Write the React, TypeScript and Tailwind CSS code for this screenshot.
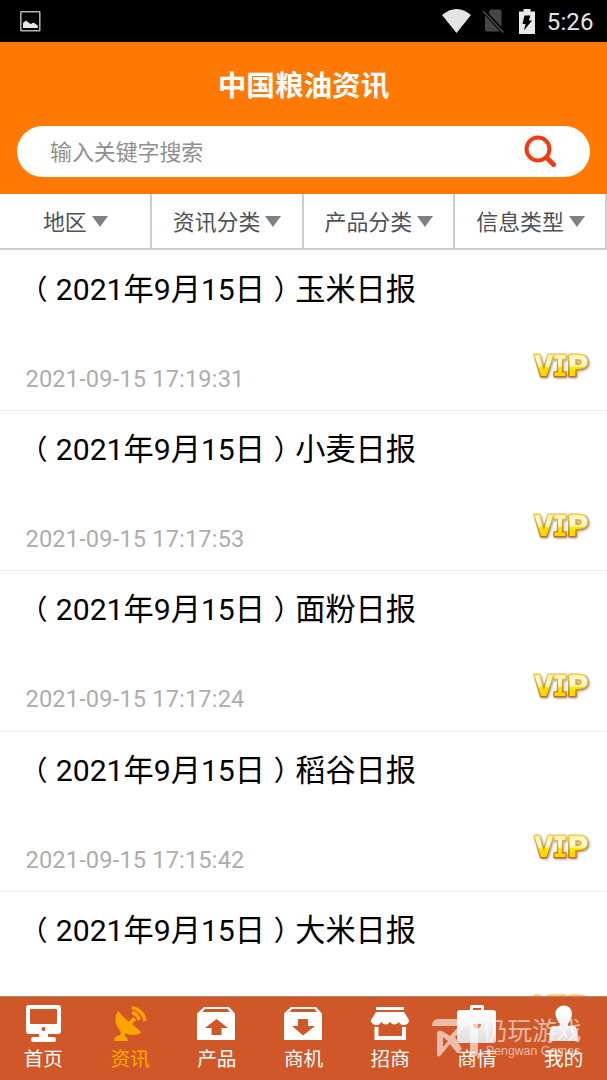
import React from "react";

const filters = ["地区", "资讯分类", "产品分类", "信息类型"];

const items = [
  { name: "玉米日报", time: "2021-09-15 17:19:31" },
  { name: "小麦日报", time: "2021-09-15 17:17:53" },
  { name: "面粉日报", time: "2021-09-15 17:17:24" },
  { name: "稻谷日报", time: "2021-09-15 17:15:42" },
  { name: "大米日报", time: "2021-09-15 17:14:08" },
];

function StatusBar() {
  return (
    <div className="flex h-[42px] shrink-0 items-center bg-black text-[#e4e4e4]">
      <svg className="ml-5 h-[21px] w-[21px]" viewBox="0 0 21 21">
        <rect x="0.8" y="0.8" width="19" height="19" rx="0.6" fill="none" stroke="#b4b4b4" strokeWidth="1.5" />
        <path d="M3 17V12L6 9.500L9 12L11 13L13.500 11.500L17.800 14.500V17Z" fill="#e8e8e8" />
      </svg>
      <svg className="ml-auto h-6 w-[29px]" viewBox="0 0 29 24">
        <path d="M0 6Q14.500 -6 29 6L14.500 24Z" fill="#e4e4e4" />
      </svg>
      <svg className="ml-[11px] h-6 w-[22px]" viewBox="0 0 22 24">
        <path d="M8.500 0.500H17.500Q19.500 0.500 19.500 2.500V18L6.500 4ZM3 6.500L18 22.500H5Q3 22.500 3 20.500Z" fill="#464646" />
        <path d="M1 2L21.500 23.500" stroke="#464646" strokeWidth="1.600" />
      </svg>
      <svg className="ml-[15px] h-[25px] w-4" viewBox="0 0 16 25">
        <path d="M4.500 0H11.500V2.500H16V25H0V2.500H4.500Z" fill="#e8e8e8" />
        <path d="M5.500 6.500H11.500L9.800 11.500H13L5 21.500L6.500 15H3.500Z" fill="#000" />
      </svg>
      <span className="ml-[12px] mr-[13.500px] pt-px font-['Roboto',sans-serif] text-[24px] leading-[42px] tracking-[0.1px]">5:26</span>
    </div>
  );
}

function Header() {
  return (
    <header className="flex h-[151.500px] shrink-0 flex-col bg-[#ff7a05] px-[17px]">
      <h1 className="h-[84.400px] text-center text-[28.600px] font-bold leading-[88px] text-white">中国粮油资讯</h1>
      <div className="flex h-[51px] items-center rounded-full bg-white pl-[33px] pr-[33px]">
        <span className="pt-[3px] text-[21.900px] leading-[48px] text-[#8f8f8f]">输入关键字搜索</span>
        <svg className="ml-auto h-[33px] w-[33px]" viewBox="0 0 33 33" fill="none" stroke="#f23b12">
          <circle cx="14" cy="14" r="11.500" strokeWidth="4" />
          <path d="M22.500 22.500L29.500 29.500" strokeWidth="5" strokeLinecap="round" />
        </svg>
      </div>
    </header>
  );
}

function Filters() {
  return (
    <div className="grid h-[56.500px] shrink-0 grid-cols-4 border-b-2 border-[#c9ced4]">
      {filters.map((f) => (
        <div key={f} className="flex items-center justify-center gap-[5px] border-r-2 border-[#c9ced4] pl-px text-[21.900px] text-[#4d5258]">
          <span className="pt-[4px] leading-[50px]">{f}</span>
          <svg className="mt-[2px] h-[11px] w-4" viewBox="0 0 16 11">
            <path d="M0 0H16L8 11Z" fill="#7d8187" />
          </svg>
        </div>
      ))}
    </div>
  );
}

function Vip() {
  return (
    <svg className="h-[32px] w-[62px] overflow-visible" viewBox="0 0 62 32">
      <defs>
        <linearGradient id="gold" gradientUnits="userSpaceOnUse" x1="0" y1="3" x2="0" y2="24">
          <stop offset="0" stopColor="#fff3a6" />
          <stop offset="0.300" stopColor="#fffbe0" />
          <stop offset="0.540" stopColor="#fff6a0" />
          <stop offset="0.600" stopColor="#ffe600" />
          <stop offset="1" stopColor="#ffd400" />
        </linearGradient>
        <linearGradient id="rim" gradientUnits="userSpaceOnUse" x1="0" y1="2" x2="0" y2="26">
          <stop offset="0" stopColor="#f5d050" />
          <stop offset="0.500" stopColor="#d9962e" />
          <stop offset="1" stopColor="#bf6a1c" />
        </linearGradient>
      </defs>
      <g
        className="text-[28px] font-bold [filter:drop-shadow(1px_1px_1px_rgba(0,0,0,0.35))]"
        fill="url(#gold)"
        stroke="url(#rim)"
        strokeWidth="3"
        paintOrder="stroke"
        strokeLinejoin="round"
      >
        <text className="font-['DejaVu_Sans',sans-serif]" x="4.500" y="24" textLength="18.500" lengthAdjust="spacingAndGlyphs">V</text>
        <text className="font-['DejaVu_Sans_Mono',monospace]" x="22.500" y="24" textLength="15" lengthAdjust="spacingAndGlyphs">I</text>
        <text className="font-['DejaVu_Sans',sans-serif]" x="37" y="24" textLength="21.500" lengthAdjust="spacingAndGlyphs">P</text>
      </g>
    </svg>
  );
}

function Article({ name, time }: { name: string; time: string }) {
  return (
    <article className="flex h-[160.350px] shrink-0 flex-col border-b border-[#ebebeb] px-[25.500px]">
      <h2 className="h-[104px] whitespace-nowrap text-[30.200px] leading-[78px] text-black">
        <span className="inline-block origin-center -translate-x-[7.500px] scale-[0.920]">（</span>
        <span>2021年9月15日</span>
        <span className="inline-block origin-center translate-x-[7.500px] scale-[0.920]">）</span>
        <span>{name}</span>
      </h2>
      <div className="flex h-[50px] justify-between">
        <time className="text-[23.600px] leading-[48px] tracking-[0.160px] text-[#adadad]">{time}</time>
        <div className="-mr-[10.500px] -mt-[3px]"><Vip /></div>
      </div>
    </article>
  );
}

const Monitor = () => (
  <>
    <path fillRule="evenodd" d="M5 0H34Q37 0 37 3V26Q37 29 34 29H24V32H30Q32 32 32 34.500T30 37H9Q7 37 7 34.500T9 32H15V29H5Q2 29 2 26V3Q2 0 5 0ZM7 4Q6 4 6 5V18Q6 19 7 19H32Q33 19 33 18V5Q33 4 32 4Z" />
    <circle cx="19.500" cy="24" r="2" fill="#d05828" />
  </>
);

const Dish = () => (
  <>
    <path d="M7 6L13 12.500L18 17L21 13Q24 12 25 15L21 19L29 26Q31 28 28 29Q22 31 16 29L14 28V31Q17 33 17 36H3Q3 31 9 30L10 27Q1 17 7 6Z" />
    <path d="M21 7.500Q27 9 28 15M21 2.500Q32 5 34 16" fill="none" stroke="currentColor" strokeWidth="3.400" />
  </>
);

const BoxIcon = ({ down }: { down?: boolean }) => (
  <>
    <path fillRule="evenodd" d="M7 2H32L38 8.500V35H0V8.500ZM8 4L5.500 7H33L30.500 4Z" />
    <path d={down ? "M14 14H24V21H31L19 30.500L8 21H14Z" : "M19.500 14L31 23H24.500V30H14.500V23H8Z"} fill="#d05828" />
  </>
);

const Shop = () => (
  <>
    <path d="M5 2H33V5H5ZM5 7H33L38 15Q38 19 34 20Q30 21 28 17Q23 22 19 17Q15 22 10 17Q8 21 4 20Q0 19 0 15Z" />
    <path d="M5.500 22V33H33V22" fill="none" stroke="currentColor" strokeWidth="4" />
  </>
);

const Briefcase = () => (
  <>
    <path fillRule="evenodd" d="M13 5V2Q13 0 15 0H25Q27 0 27 2V5H36Q39 5 39 8V35Q39 38 36 38H3Q0 38 0 35V8Q0 5 3 5ZM16 5H24V3H16Z" fill="url(#shade)" />
    <path d="M16 19H24V21Q20 26 16 21Z" fill="#d9845f" />
  </>
);

const Person = () => (
  <path d="M19.500 0.500A8 8 0 0 1 28 9Q27.500 15 24 19V21H30Q34 22 34.500 36H5Q5 22 9 21H16V19Q12 15 11.500 9A8 8 0 0 1 19.500 0.500Z" fill="url(#shade)" />
);

const tabs = [
  { label: "首页", icon: <Monitor /> },
  { label: "资讯", icon: <Dish />, active: true },
  { label: "产品", icon: <BoxIcon /> },
  { label: "商机", icon: <BoxIcon down /> },
  { label: "招商", icon: <Shop /> },
  { label: "商情", icon: <Briefcase /> },
  { label: "我的", icon: <Person /> },
];

function TabBar() {
  return (
    <nav className="relative grid h-[84.500px] shrink-0 grid-cols-7 border-t border-[#b9856d] bg-[#d05828]">
      {tabs.map((t) => (
        <div key={t.label} className={t.active ? "flex flex-col items-center pt-[8.500px] text-[#ffa500]" : "flex flex-col items-center pt-[8.500px] text-white"}>
          <svg className="h-[39px] w-[39px] shrink-0" viewBox="0 0 39 39" fill="currentColor">
            <defs>
              <linearGradient id="shade" x1="0" y1="0" x2="0" y2="1">
                <stop offset="0.200" stopColor="#fff" />
                <stop offset="1" stopColor="#dcdcdc" />
              </linearGradient>
            </defs>
            {t.icon}
          </svg>
          <span className="pt-[1.500px] text-[19.600px] leading-[28px]">{t.label}</span>
        </div>
      ))}
      <div className="absolute left-[432px] top-[20px] flex text-white/60">
        <svg className="h-[44px] w-[51px] shrink-0" viewBox="0 0 51 44" fill="currentColor">
          <path d="M0 9Q0 2 7 2H46V36Q46 40 38 40V8H33L23 20L30 32L25 36L18 27L9 38Q5 42 5 36V17Q5 12 10 14L18 19L27 9H0ZM11 20V30L16 24Z" fillRule="evenodd" />
        </svg>
        <div className="flex flex-col whitespace-nowrap">
          <span className="h-[27px] text-[24.600px] leading-[30px]">仍玩游戏</span>
          <span className="pl-[3px] font-['Liberation_Sans',sans-serif] text-[12.300px] leading-[15px]">Pengwan Games</span>
        </div>
      </div>
    </nav>
  );
}

export default function App() {
  return (
    <div className="flex h-[1080px] w-[607px] flex-col overflow-hidden bg-white font-['Roboto','Noto_Sans_CJK_SC',sans-serif]" lang="zh-CN">
      <StatusBar />
      <Header />
      <Filters />
      <main className="flex min-h-0 flex-1 flex-col overflow-hidden pt-[0.500px]">
        {items.map((it) => (
          <Article key={it.name} {...it} />
        ))}
      </main>
      <TabBar />
    </div>
  );
}
